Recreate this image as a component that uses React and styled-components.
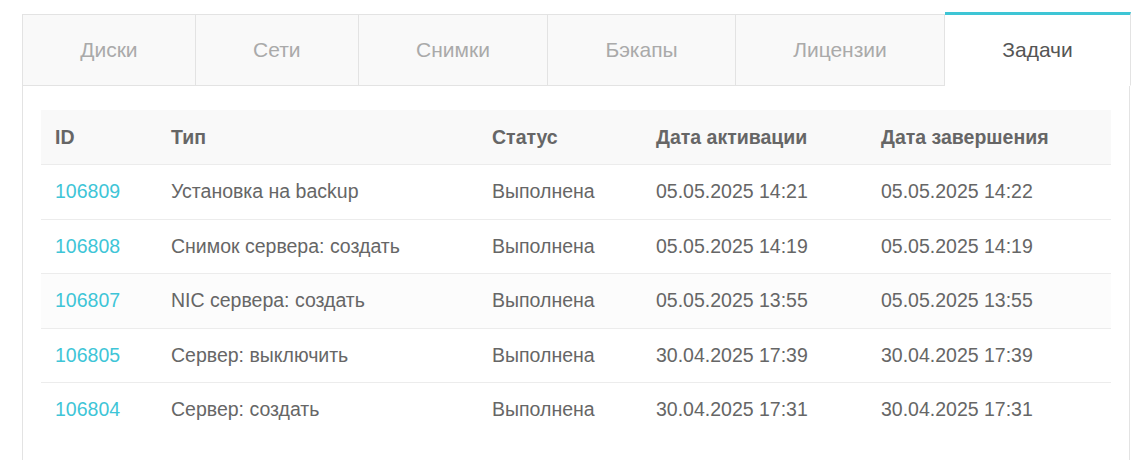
import React from "react";
import styled, { createGlobalStyle } from "styled-components";

const Global = createGlobalStyle`
  html, body { margin: 0; padding: 0; background: #fff; }
  body { font-family: "Liberation Sans", Arial, sans-serif; }
`;

const Page = styled.div`
  padding: 12px 13px 0 22px;
  width: 1109px;
`;

const TabBar = styled.div`
  display: flex;
  align-items: flex-end;
`;

const Tab = styled.div`
  flex: 1 1 auto;
  box-sizing: border-box;
  display: flex;
  align-items: center;
  justify-content: center;
  font-size: 21px;
  height: ${(p) => (p.$active ? "74px" : "72px")};
  background: ${(p) => (p.$active ? "#fff" : "#f9f9f9")};
  color: ${(p) => (p.$active ? "#555" : "#aaa")};
  border-top: ${(p) => (p.$active ? "3px solid #3ec5d5" : "1px solid #e3e3e3")};
  border-bottom: ${(p) => (p.$active ? "1px solid #fff" : "1px solid #e3e3e3")};
  border-right: 1px solid #e3e3e3;
  border-left: ${(p) => (p.$first ? "1px solid #e3e3e3" : "none")};
`;

const Panel = styled.div`
  border-left: 1px solid #e3e3e3;
  border-right: 1px solid #e3e3e3;
  margin-right: 1px;
  padding: 24px 18px 40px 18px;
`;

const Table = styled.table`
  width: 100%;
  border-collapse: collapse;
  table-layout: fixed;
  font-size: 19.5px;
`;

const HeadRow = styled.tr`
  background: #f9f9f9;
`;

const Th = styled.th`
  text-align: left;
  font-weight: bold;
  color: #666;
  height: 54px;
  padding: 0 0 0 14px;
  border-bottom: 1px solid #ececec;
`;

const Row = styled.tr`
  background: ${(p) => (p.$hover ? "#fcfcfc" : "#fff")};
`;

const Td = styled.td`
  height: 53.5px;
  padding: 0 0 0 14px;
  color: #666;
  border-bottom: ${(p) => (p.$last ? "none" : "1px solid #ececec")};
  white-space: nowrap;
`;

const IdLink = styled.a`
  color: #3ec5d7;
  text-decoration: none;
`;

const tabs = ["Диски", "Сети", "Снимки", "Бэкапы", "Лицензии", "Задачи"];

const rows = [
  ["106809", "Установка на backup", "Выполнена", "05.05.2025 14:21", "05.05.2025 14:22"],
  ["106808", "Снимок сервера: создать", "Выполнена", "05.05.2025 14:19", "05.05.2025 14:19"],
  ["106807", "NIC сервера: создать", "Выполнена", "05.05.2025 13:55", "05.05.2025 13:55"],
  ["106805", "Сервер: выключить", "Выполнена", "30.04.2025 17:39", "30.04.2025 17:39"],
  ["106804", "Сервер: создать", "Выполнена", "30.04.2025 17:31", "30.04.2025 17:31"],
];

export default function App() {
  return (
    <Page>
      <Global />
      <TabBar>
        {tabs.map((t, i) => (
          <Tab key={t} $first={i === 0} $active={t === "Задачи"}>
            {t}
          </Tab>
        ))}
      </TabBar>
      <Panel>
        <Table>
          <colgroup>
            <col style={{ width: 116 }} />
            <col style={{ width: 321 }} />
            <col style={{ width: 164 }} />
            <col style={{ width: 225 }} />
            <col />
          </colgroup>
          <thead>
            <HeadRow>
              <Th>ID</Th>
              <Th>Тип</Th>
              <Th>Статус</Th>
              <Th>Дата активации</Th>
              <Th>Дата завершения</Th>
            </HeadRow>
          </thead>
          <tbody>
            {rows.map((r, i) => (
              <Row key={r[0]} $hover={i === 2}>
                <Td $last={i === rows.length - 1}>
                  <IdLink href="#">{r[0]}</IdLink>
                </Td>
                <Td $last={i === rows.length - 1}>{r[1]}</Td>
                <Td $last={i === rows.length - 1}>{r[2]}</Td>
                <Td $last={i === rows.length - 1}>{r[3]}</Td>
                <Td $last={i === rows.length - 1}>{r[4]}</Td>
              </Row>
            ))}
          </tbody>
        </Table>
      </Panel>
    </Page>
  );
}
